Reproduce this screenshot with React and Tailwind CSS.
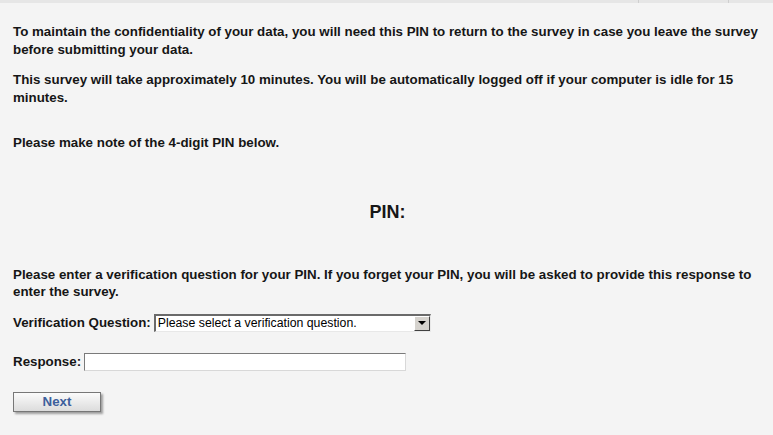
export default function App() {
  return (
    <div className="w-[773px] h-[435px] bg-[#f4f4f4] text-[#161616] overflow-hidden" style={{ fontFamily: '"Liberation Sans", Arial, sans-serif' }}>
      <div className="h-[3px] bg-[#e6e6e6] flex justify-end">
        <div className="w-px bg-[#cfcfcf] mr-[89px]" />
        <div className="w-px bg-[#cfcfcf] mr-[44px]" />
      </div>
      <div className="px-[13px] font-bold text-[13.33px] leading-[17.5px]">
        <p className="mt-[20px]">To maintain the confidentiality of your data, you will need this PIN to return to the survey in case you leave the survey before submitting your data.</p>
        <p className="mt-[13px]">This survey will take approximately 10 minutes. You will be automatically logged off if your computer is idle for 15 minutes.</p>
        <p className="mt-[28px]">Please make note of the 4-digit PIN below.</p>
        <p className="mt-[50px] text-center text-[18px] leading-[20px] pl-[2px]">PIN:</p>
        <p className="mt-[44px]">Please enter a verification question for your PIN. If you forget your PIN, you will be asked to provide this response to enter the survey.</p>
        <div className="mt-[13px] flex items-center">
          <span>Verification Question:</span>
          <div className="ml-[3px] w-[277px] h-[18px] bg-white border-t-2 border-l-2 border-t-[#6a6a6a] border-l-[#6a6a6a] border-b border-r border-b-[#e8e8e8] border-r-[#e8e8e8] flex items-center">
            <span className="flex-1 pl-[2px] font-normal text-[12.3px] leading-[14px] text-black">Please select a verification question.</span>
            <div className="w-[16px] h-full bg-[#d6d3ce] border-t border-l border-t-white border-l-white border-b border-r border-b-[#404040] border-r-[#404040] flex items-center justify-center">
              <div className="w-0 h-0 border-l-[4px] border-r-[4px] border-t-[4px] border-l-transparent border-r-transparent border-t-black" />
            </div>
          </div>
        </div>
        <div className="mt-[21px] flex items-center">
          <span>Response:</span>
          <div className="ml-[3px] w-[322px] h-[18px] bg-white border-t border-l border-t-[#7a7a7a] border-l-[#7a7a7a] border-b border-r border-b-[#d8d8d8] border-r-[#d8d8d8]" />
        </div>
        <div className="mt-[21px]">
          <button className="w-[88px] h-[20px] border border-[#777] bg-gradient-to-b from-[#fbfbfb] to-[#dcdcdc] shadow-[2px_2px_2px_rgba(0,0,0,0.35)] text-[#3d5f9c] font-bold text-[13.33px] leading-[16px]">Next</button>
        </div>
      </div>
    </div>
  );
}
